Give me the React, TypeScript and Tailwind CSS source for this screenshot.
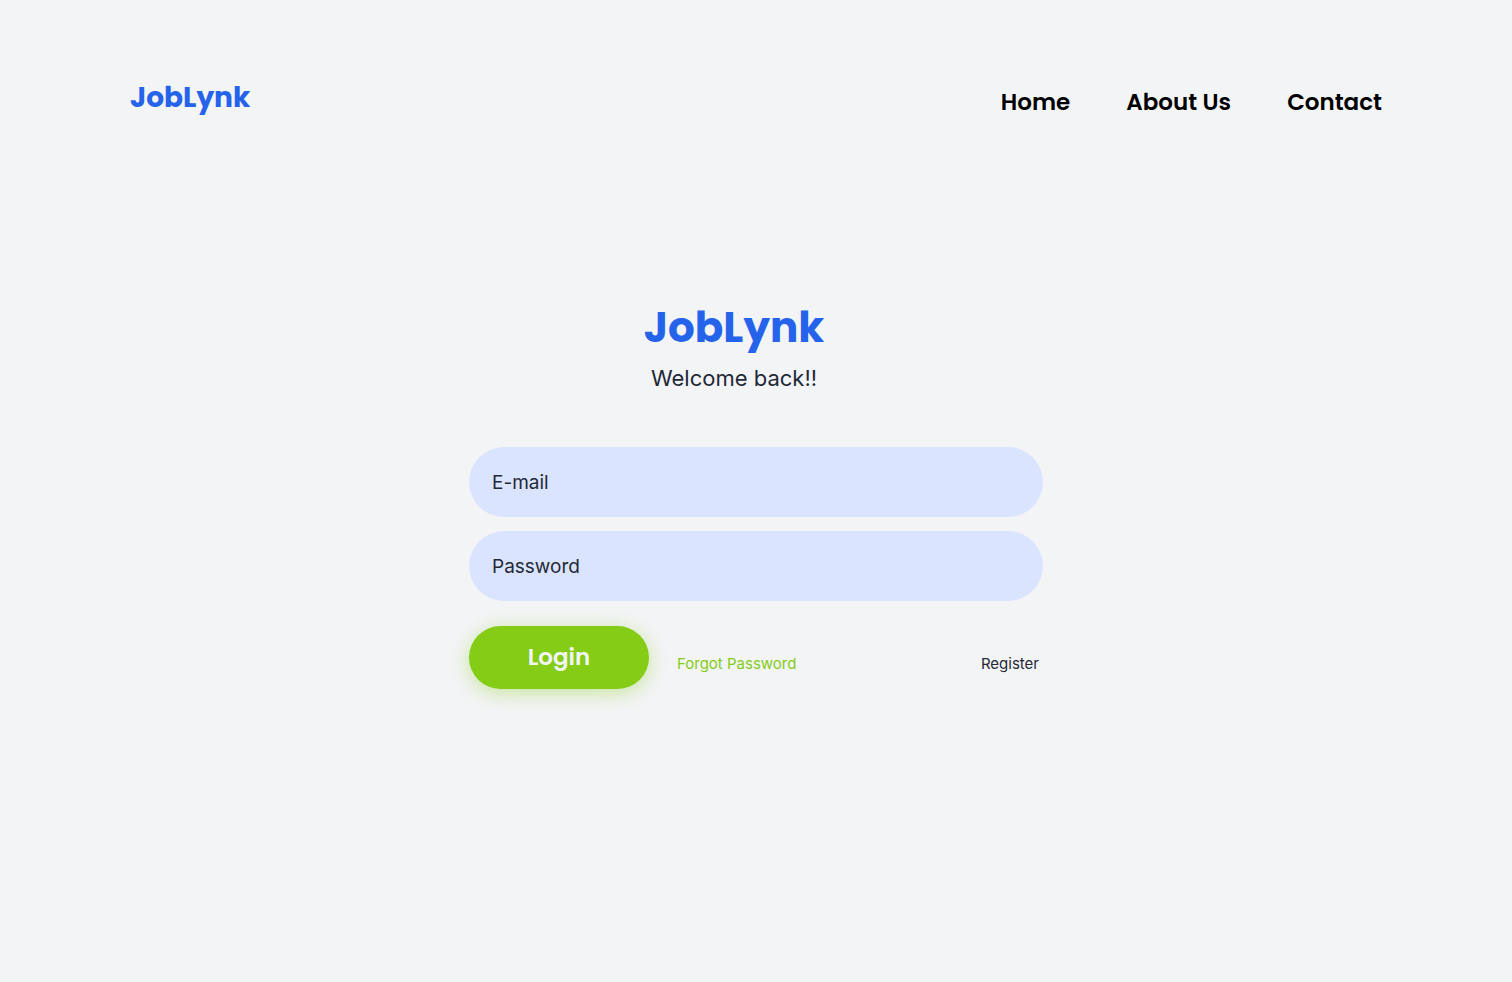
import React from "react";

const navItems = [
  { label: "Home", href: "#home" },
  { label: "About Us", href: "#about" },
  { label: "Contact", href: "#contact" },
];

const inputStyle =
  "h-[70px] w-full rounded-full bg-[#dbe4fe] px-[23px] text-[19px] text-[#1f2937] outline-none placeholder:text-[#1f2937] focus:ring-2 focus:ring-[#2563eb]";

export default function App() {
  return (
    <div className="min-h-screen bg-[#f3f4f6] font-['Inter',sans-serif] text-[#1f2937]">
      <header className="flex items-start justify-between px-[130px] pt-20 font-['Poppins','Inter',sans-serif]">
        <a href="#home" className="text-[28px] leading-9 font-bold text-[#2563eb]">
          JobLynk
        </a>
        <nav className="flex gap-14 pt-1 text-[23px] leading-9 font-semibold text-black">
          {navItems.map((item) => (
            <a key={item.label} href={item.href}>
              {item.label}
            </a>
          ))}
        </nav>
      </header>

      <main className="mx-auto mt-[180px] w-full max-w-[574px]">
        <div className="flex flex-col items-center pr-11">
          <h1 className="font-['Poppins','Inter',sans-serif] text-[42px] leading-[56px] font-bold text-[#2563eb]">
            JobLynk
          </h1>
          <p className="mt-1 text-[22px] leading-9">Welcome back!!</p>
        </div>

        <form className="mt-[51px]" onSubmit={(event) => event.preventDefault()}>
          <div className="flex flex-col gap-[14px]">
            <input type="email" aria-label="E-mail" placeholder="E-mail" className={inputStyle} />
            <input type="password" aria-label="Password" placeholder="Password" className={inputStyle} />
          </div>
          <div className="mt-[25px] flex items-center justify-between pr-1">
            <div className="flex items-center gap-7">
              <button
                type="submit"
                className="h-[63px] w-[180px] rounded-full bg-[#84cc16] font-['Poppins','Inter',sans-serif] text-[23px] font-semibold text-[#f3f4f6] shadow-[0_4px_20px_rgba(132,204,22,0.4)]"
              >
                Login
              </button>
              <a href="#forgot-password" className="pt-3 text-[15px] leading-5 text-[#84cc16]">
                Forgot Password
              </a>
            </div>
            <a href="#register" className="pt-3 text-[15px] leading-5">
              Register
            </a>
          </div>
        </form>
      </main>
    </div>
  );
}
